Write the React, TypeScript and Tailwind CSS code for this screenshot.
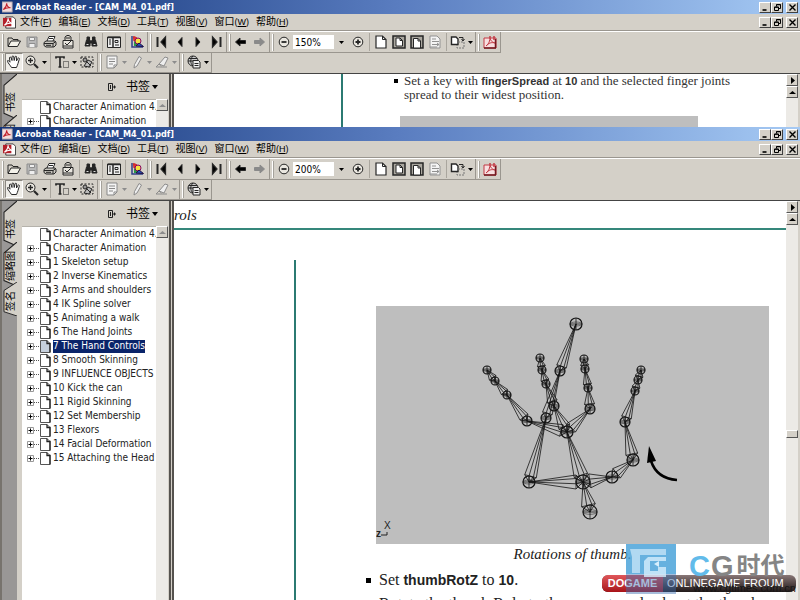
import { Fragment, useState } from "react";
import type { ReactNode } from "react";
import clsx from "clsx";

const MENUS = [
  { label: "文件", hotkey: "F" },
  { label: "编辑", hotkey: "E" },
  { label: "文档", hotkey: "D" },
  { label: "工具", hotkey: "T" },
  { label: "视图", hotkey: "V" },
  { label: "窗口", hotkey: "W" },
  { label: "帮助", hotkey: "H" },
];

const BOOKMARKS = [
  "Character Animation 4.",
  "Character Animation",
  "1 Skeleton setup",
  "2 Inverse Kinematics",
  "3 Arms and shoulders",
  "4 IK Spline solver",
  "5 Animating a walk",
  "6 The Hand Joints",
  "7 The Hand Controls",
  "8 Smooth Skinning",
  "9 INFLUENCE OBJECTS",
  "10 Kick the can",
  "11 Rigid Skinning",
  "12 Set Membership",
  "13 Flexors",
  "14 Facial Deformation",
  "15 Attaching the Head",
];

const ICONS: Record<string, ReactNode> = {
  open: (
    <>
      <path d="M2 12V4h4l1 1.5h5V7" />
      <path d="M2 12.5 5 7h9.5l-3 5.5z" fill="#f4f2ea" />
    </>
  ),
  save: (
    <g stroke="#8e8e8e">
      <path d="M3 3h10v10H3z" fill="#b8b8b8" />
      <path d="M5.500 3.500h5v3h-5zM5 13V9.500h6V13" fill="#eee" />
    </g>
  ),
  print: (
    <>
      <path d="m5 7 2-4.500h6L11 7" fill="#fff" />
      <path d="M2 8.500 4 7h9l1 1.500V11l-2 2H4l-2-1.500z" fill="#c9c6bf" />
      <path d="M2 9.500h9l3-2M11 9.500V13M7 4.500h4M4 11.300h5" />
    </>
  ),
  mail: (
    <>
      <path d="M5 6V3l2-1.500h2L11 3v3" />
      <path d="M3 6.500h10V14H3z" fill="#e9e6df" />
      <path d="m5 9 2 2 4-4M3 12h10M6 4h4" />
    </>
  ),
  find: (
    <g fill="#222">
      <path d="M4 3h2.500v3H4zM9.500 3H12v3H9.500zM2 12l1.500-6h3.500v6zM9 12V6h3.500L14 12z" />
      <path d="M7 7h2v2H7z" />
      <path d="M3.500 10.500h2M10.500 10.500h2" stroke="#ddd" />
    </g>
  ),
  pane: (
    <>
      <path d="M1.500 3h13v10.500h-13z" fill="#eee" />
      <path d="M2 3.500h12M7 4v9" strokeWidth="1.500" />
      <path d="M3 6h2M3 8h2M3 10h2M9 6.500h3v2H9zM9 11h4" />
    </>
  ),
  image: (
    <>
      <path d="M3 2v11h11" stroke="#303f86" strokeWidth="1.500" />
      <path d="m4.500 2.500 3 1L9 6l-4 1z" fill="#e33" stroke="#c22" />
      <path d="M5 7.500h3V12H5z" fill="#2b9b46" stroke="none" />
      <circle cx="9" cy="7" r="3" fill="#f5e23c" stroke="#806" />
      <path d="m7 12 3-3 4.500 3.500z" fill="#2352c4" stroke="#214" />
    </>
  ),
  first: (
    <>
      <path d="M3.500 3v10" strokeWidth="2" />
      <path d="M11.500 3 7 8l4.500 5z" fill="#000" strokeWidth="1.300" />
    </>
  ),
  prev: <path d="M10 3.500 6 8l4 4.500z" fill="#000" />,
  next: <path d="m6 3.500 4 4.500-4 4.500z" fill="#000" />,
  last: (
    <>
      <path d="M12.500 3v10" strokeWidth="2" />
      <path d="M4.500 3 9 8l-4.500 5z" fill="#000" strokeWidth="1.300" />
    </>
  ),
  back: <path d="m2.500 8 4.500-4v2.500h5.500v3H7V12z" fill="#000" />,
  forward: <path d="M13.500 8 9 4v2.500H3.500v3H9V12z" fill="#8a8a8a" stroke="#8a8a8a" />,
  minus: (
    <>
      <circle cx="8" cy="8" r="4.800" fill="#e9e6df" />
      <path d="M5.500 8h5" strokeWidth="1.800" />
    </>
  ),
  plus: (
    <>
      <circle cx="8" cy="8" r="4.800" fill="#e9e6df" />
      <path d="M5.500 8h5M8 5.500v5" strokeWidth="1.800" />
    </>
  ),
  actual: (
    <>
      <path d="M3 2h6.500L13 5.500V14H3z" fill="#fff" strokeWidth="1.200" />
      <path d="M9.500 2v3.500H13" />
    </>
  ),
  fitPage: (
    <>
      <path d="M2 2h12v12H2z" fill="#aaa79f" strokeWidth="1.500" />
      <path d="M5 4h4l2.500 2.500V12H5z" fill="#fff" />
      <path d="M9 4v2.500h2.500" />
    </>
  ),
  fitWidth: (
    <>
      <path d="M2 14V2h12v12z" fill="#aaa79f" strokeWidth="1.500" />
      <path d="M4.500 4.500H9L11.500 7v7h-7z" fill="#fff" />
      <path d="M9 4.500V7h2.500" />
    </>
  ),
  reflow: (
    <g stroke="#919191">
      <path d="M3 2h7l3 3v9H3z" fill="#f4f4f4" />
      <path d="M5 5h4M5 7.500h7M5 10.500h7M10 9l2 1.500-2 1.500M3 13h7" />
    </g>
  ),
  rotate: (
    <>
      <path d="M1.500 3H6l2 2v5.500H1.500z" fill="#fff" strokeWidth="1.400" />
      <path d="M9 3.500h4v3M11.500 5l1.500 2 1.500-2" />
      <path d="M8 8h6v6H7v-3" stroke="#777" strokeDasharray="2 1" />
    </>
  ),
  acrobat: (
    <g stroke="#c23b45">
      <path d="M2 4h12v10H2z" fill="#f8dfe0" />
      <path d="M2 14h12M13.500 5v9" stroke="#711a21" strokeWidth="1.500" />
      <path d="M4 12c3-2 4-5 4-10 0 5 2 6 5 7-4-1-6 0-9 3z" />
      <path d="M12 2v4" strokeWidth="1.500" />
    </g>
  ),
  hand: (
    <path
      d="M5.500 13.500C4 11 2 9 1.500 7.500s1-1.300 2.500.700L3.500 4c0-1.300 1.300-1.300 1.700 0L6 6.500V3c0-1.400 1.700-1.400 1.800 0l.4 3.500L9 3c.3-1.300 1.700-1 1.600.200L10.500 7l1.300-2.500c.600-1.100 1.900-.500 1.500.700L12 9.500c-.3 1.500-1 2.500-1.500 4z"
      fill="#fff"
    />
  ),
  zoomIn: (
    <>
      <circle cx="6.500" cy="6.500" r="4.500" fill="#e9e6df" />
      <path d="M4 6.500h5M6.500 4v5" strokeWidth="1.400" />
      <path d="m10 10 4 4" strokeWidth="2.200" />
    </>
  ),
  text: (
    <>
      <path d="M2 4.500V3h8v1.500M6 3v10M4.500 13h3" strokeWidth="1.700" />
      <path d="M9.500 7.500h5v6h-5z" strokeDasharray="1 1" />
    </>
  ),
  snapshot: (
    <>
      <path d="M2 3h12v10H2z" strokeDasharray="2 1.500" />
      <circle cx="6" cy="6" r="2" fill="#999" />
      <path d="m5 12 4-6 4 2-3 5zM7 7l5 5" fill="#bbb" />
    </>
  ),
  note: (
    <g stroke="#888">
      <path d="M3 2h10v9l-3 3H3z" fill="#f4f4f4" />
      <path d="M5 5h6M5 7.500h6M5 10h4M10 14v-3h3" />
    </g>
  ),
  pencil: <path d="M10 2.500 12.500 4 8 12l-3 2 .5-3.500z" fill="#eee" stroke="#8c8c8c" />,
  highlight: (
    <g stroke="#8c8c8c">
      <path d="m5 10 6-7 3 1-4 8z" fill="#eee" />
      <path d="m5 10-3 3h11M5 10l2.500 2" />
    </g>
  ),
  web: (
    <>
      <circle cx="7" cy="7" r="5" fill="#ccc" />
      <path d="M2 7h10M7 2C4 5 4 9 7 12M3 4.500h8" />
      <path d="M7 6.500h5.500L14 8v6H7z" fill="#eee" />
      <path d="M8.500 9.500h4M8.500 11.500h4" />
    </>
  ),
};

const Icon = ({ name }: { name: string }) => (
  <svg viewBox="0 0 16 16" className="h-4 w-4" fill="none" stroke="#262626" strokeWidth="1">
    {ICONS[name]}
  </svg>
);

const ToolButton = ({ name, active }: { name: string; active?: boolean }) => (
  <button
    type="button"
    aria-label={name}
    className={clsx(
      "flex h-[18px] w-[18px] shrink-0 items-center justify-center",
      active && "border border-[#8b8882] border-r-white border-b-white bg-[#efede8]",
    )}
  >
    <Icon name={name} />
  </button>
);

const DropArrow = ({ faded, label }: { faded?: boolean; label: string }) => (
  <button type="button" aria-label={label} className="flex h-[18px] w-[7px] shrink-0 items-center justify-center">
    <svg viewBox="0 0 5 3" className="h-[3px] w-[5px]">
      <path d="M0 0h5L2.500 3z" fill={faded ? "#8c8c8c" : "#000"} />
    </svg>
  </button>
);

const Separator = () => <div className="mx-0.5 h-[18px] w-px shrink-0 bg-[#aaa69e]" />;

const ToolGroup = ({ children }: { children: ReactNode }) => (
  <div className="flex h-[21px] shrink-0 items-center border-r border-b border-[#9a968f] pr-px">
    <div className="mr-px ml-0.5 h-[17px] w-0.5 border-l border-white bg-[#a5a29b]" />
    {children}
  </div>
);

const CAPTION_GLYPHS: Record<string, ReactNode> = {
  minimize: <path d="M1.500 7h4" strokeWidth="1.600" />,
  restore: (
    <>
      <path d="M3.500 3.500v-2h4v4h-2M3.500 1.800h4" />
      <path d="M1.500 4h4v3.500h-4zM1.500 4.300h4" />
    </>
  ),
  close: <path d="m1.500 1.500 6 6M7.500 1.500l-6 6" strokeWidth="1.400" />,
};

const CaptionButton = ({ kind }: { kind: string }) => (
  <button
    type="button"
    aria-label={kind}
    className="flex h-[11px] w-3 items-center justify-center border border-white border-r-[#404040] border-b-[#404040] bg-[#d4d0c8]"
  >
    <svg viewBox="0 0 9 9" className="h-[9px] w-[9px]" fill="none" stroke="#000">
      {CAPTION_GLYPHS[kind]}
    </svg>
  </button>
);

const CaptionButtons = () => (
  <div className="ml-auto flex pr-0.5">
    <CaptionButton kind="minimize" />
    <CaptionButton kind="restore" />
    <div className="w-[3px]" />
    <CaptionButton kind="close" />
  </div>
);

const PdfLogo = ({ small }: { small?: boolean }) => (
  <svg viewBox="0 0 14 14" className={small ? "h-3 w-3" : "h-[13px] w-[13px]"}>
    {small ? (
      <path d="M0 1h12v12H0z" fill="#f3dcdc" stroke="#8d8d9c" />
    ) : (
      <>
        <path d="M3 1h8l2.500 2.500V13H3z" fill="#fff" stroke="#333" />
        <path d="M0 2h9v9H0z" fill="#b3202a" />
      </>
    )}
    <path
      d="M1.500 10C4 8 5.500 5.500 5.500 2.500 5.500 6 7.500 7.500 10 8 7 7.500 4 8 1.500 10z"
      fill="none"
      stroke={small ? "#c01f2b" : "#fff"}
      strokeWidth="1.200"
    />
  </svg>
);

const PageIcon = ({ selected }: { selected: boolean }) => (
  <svg viewBox="0 0 11 13" className="h-[13px] w-[11px] shrink-0">
    <path d="M.5.500h6.500L10 3.500v9H.5z" fill={selected ? "#c5cfdc" : "#fff"} stroke="#555" />
    <path d="M7 .500v3h3v9" fill="none" stroke="#222" strokeWidth="1.300" />
  </svg>
);

const NavTab = ({ label, className }: { label: string; className: string }) => (
  <button type="button" className={clsx("relative flex w-full shrink-0 items-center justify-center", className)}>
    <svg viewBox="0 0 14 40" preserveAspectRatio="none" className="absolute inset-0 h-full w-full">
      <path d="M14 0 1 10v25l13 5z" fill="#d4d0c8" />
      <path d="M14 0 1 10v25l13 5" fill="none" stroke="#222" />
    </svg>
    <span className="relative rotate-180 text-[10px] leading-3 [text-orientation:sideways] [writing-mode:vertical-rl]">
      {label}
    </span>
  </button>
);

const ScrollButton = ({ path, label, pale }: { path: string; label: string; pale?: boolean }) => (
  <button
    type="button"
    aria-label={label}
    className="flex h-3 w-full shrink-0 items-center justify-center border border-white border-r-[#555] border-b-[#555] bg-[#d4d0c8]"
  >
    <svg viewBox="0 0 7 7" className="h-[7px] w-[7px]">
      <path d={path} fill={pale ? "#8c8c8c" : "#000"} />
    </svg>
  </button>
);

const Sidebar = () => {
  const [selected, setSelected] = useState(8);

  return (
    <aside className="flex w-[174px] shrink-0 overflow-hidden bg-[#d4d0c8]">
      <div className="flex w-[17px] shrink-0 flex-col border-l-2 border-[#77736d] bg-[#999796] pl-px">
        <NavTab label="书签" className="h-[45px] pt-2.5 pl-0.5" />
        <NavTab label="缩略图" className="-mt-1 h-11 pt-1 pl-0.5" />
        <NavTab label="签名" className="-mt-1 h-[34px] pt-1 pl-0.5" />
      </div>
      <div className="flex min-w-0 flex-1 flex-col pl-[5px]">
        <div className="flex h-[25px] shrink-0 items-center justify-end gap-1 pr-2.5">
          <button type="button" aria-label="collapse" className="mr-1.5">
            <svg viewBox="0 0 8 8" className="h-2 w-2" fill="none" stroke="#222">
              <path d="M.5.500h4v7h-4zM2.500 2v4M5 4h3M6.500 2.500v3" />
            </svg>
          </button>
          <button type="button" className="flex items-center gap-0.5 text-xs leading-4">
            书签
            <svg viewBox="0 0 6 4" className="h-1 w-1.5">
              <path d="M0 0h6L3 4z" />
            </svg>
          </button>
        </div>
        <div className="flex min-h-0 flex-1">
          <ul className="min-w-0 flex-1 overflow-hidden border-t border-[#b5b2ab] bg-white">
            {BOOKMARKS.map((title, i) => (
              <li key={title} className="flex h-3.5 items-center pl-1">
                {i > 0 ? (
                  <button type="button" aria-label={`expand ${title}`} className="w-3.5 shrink-0">
                    <svg viewBox="0 0 14 9" className="h-[9px] w-3.5" fill="none" stroke="#555">
                      <path d="M1.500 1.500h6v6h-6z" stroke="#999" />
                      <path d="M2.500 4.500h4M4.500 2.500v4" stroke="#000" />
                      <path d="M8 4.500h6" strokeDasharray="1 1" />
                    </svg>
                  </button>
                ) : (
                  <span className="w-3.5 shrink-0" />
                )}
                <PageIcon selected={i === selected} />
                <button
                  type="button"
                  onClick={() => setSelected(i)}
                  className={clsx(
                    "ml-0.5 h-[13px] font-['DejaVu_Sans_Condensed','DejaVu_Sans',sans-serif] text-[10px] leading-3 whitespace-nowrap",
                    i === selected ? "bg-[#0a246a] text-white" : "text-[#222]",
                  )}
                >
                  {title}
                </button>
              </li>
            ))}
          </ul>
          <div className="w-3 shrink-0 bg-[#eceae6]">
            <ScrollButton path="M0 5h7L3.500 2z" label="scroll bookmarks up" pale />
          </div>
        </div>
      </div>
      <div className="w-px shrink-0" />
      <div className="w-[5px] shrink-0 border-x-2 border-[#55524e] bg-[#d4d0c8]" />
    </aside>
  );
};

type AcrobatWindowProps = {
  zoom: string;
  thumb?: boolean;
  className: string;
  children: ReactNode;
};

const AcrobatWindow = ({ zoom, thumb, className, children }: AcrobatWindowProps) => {
  const [zoomValue, setZoomValue] = useState(zoom);

  return (
    <section className={clsx("flex w-full flex-col overflow-hidden bg-[#d4d0c8]", className)}>
      <header className="flex h-3.5 shrink-0 items-center bg-linear-to-r from-[#153579] via-[#5a7dc0] to-[#a6caf4] pl-0.5">
        <PdfLogo small />
        <h1 className="ml-px font-['DejaVu_Sans_Condensed','DejaVu_Sans',sans-serif] text-[9px] leading-3 font-bold whitespace-nowrap text-white">
          Acrobat Reader - [CAM_M4_01.pdf]
        </h1>
        <CaptionButtons />
      </header>
      <nav className="flex h-[17px] shrink-0 items-center border-b border-[#9a968f] pl-[3px]">
        <PdfLogo />
        <div className="ml-1 flex gap-[7px]">
          {MENUS.map(({ label, hotkey }) => (
            <button key={hotkey} type="button" className="text-[10px] leading-3.5 whitespace-nowrap">
              {label}
              <span className="text-[9px]">
                (<span className="underline">{hotkey}</span>)
              </span>
            </button>
          ))}
        </div>
        <CaptionButtons />
      </nav>
      <div className="flex h-[21px] shrink-0 border-t border-white">
        <ToolGroup>
          {["open", "save", "print", "mail"].map((name) => (
            <ToolButton key={name} name={name} />
          ))}
          {["find", "pane", "image"].map((name) => (
            <Fragment key={name}>
              <Separator />
              <ToolButton name={name} />
            </Fragment>
          ))}
        </ToolGroup>
        <ToolGroup>
          {["first", "prev", "next", "last"].map((name) => (
            <ToolButton key={name} name={name} />
          ))}
        </ToolGroup>
        <ToolGroup>
          <ToolButton name="back" />
          <ToolButton name="forward" />
        </ToolGroup>
        <ToolGroup>
          <ToolButton name="minus" />
          <input
            type="text"
            aria-label="zoom"
            value={zoomValue}
            onChange={(e) => setZoomValue(e.target.value)}
            className="h-3.5 w-[41px] bg-white pl-0.5 font-['DejaVu_Sans_Condensed','DejaVu_Sans',sans-serif] text-[10px] leading-3 outline-none"
          />
          <div className="px-1">
            <DropArrow label="zoom levels" />
          </div>
          <ToolButton name="plus" />
          <Separator />
          {["actual", "fitPage", "fitWidth", "reflow"].map((name) => (
            <ToolButton key={name} name={name} />
          ))}
          <Separator />
          <ToolButton name="rotate" />
          <DropArrow label="rotate options" />
        </ToolGroup>
        <ToolGroup>
          <ToolButton name="acrobat" />
        </ToolGroup>
      </div>
      <div className="flex h-[21px] shrink-0">
        <ToolGroup>
          <ToolButton name="hand" active />
          <ToolButton name="zoomIn" />
          <DropArrow label="zoom tools" />
          <Separator />
          <ToolButton name="text" />
          <DropArrow label="text tools" />
          <ToolButton name="snapshot" />
        </ToolGroup>
        <ToolGroup>
          {["note", "pencil", "highlight"].map((name) => (
            <div key={name} className="flex">
              <ToolButton name={name} />
              <DropArrow label={`${name} options`} faded />
            </div>
          ))}
        </ToolGroup>
        <ToolGroup>
          <ToolButton name="web" />
          <DropArrow label="web options" />
        </ToolGroup>
      </div>
      <div className="flex min-h-0 flex-1 border-t border-[#444]">
        <Sidebar />
        <main className="min-w-0 flex-1 overflow-hidden bg-white">{children}</main>
        <div className="mr-0.5 flex w-3 shrink-0 flex-col bg-[#eceae6]">
          <ScrollButton path="M2 0v7l4-3.500z" label="next view" />
          <ScrollButton path="M0 5h7L3.500 2z" label="scroll up" />
          {thumb && (
            <div className="mt-[205px] h-2 border border-white border-r-[#555] border-b-[#555] bg-[#d4d0c8]" />
          )}
        </div>
      </div>
    </section>
  );
};

// [x, y, radius]
const JOINTS: Record<string, [number, number, number]> = {
  wrist: [590, 512, 7],
  palm: [583, 482, 7],
  thumb1: [529, 482, 6],
  thumb2: [546, 418, 5],
  thumb3: [560, 371, 5],
  thumbTip: [576, 324, 6],
  knuckle: [567, 432, 6],
  a1: [527, 421, 5],
  a2: [507, 395, 4],
  a3: [495, 381, 4],
  aTip: [487, 370, 4],
  b1: [554, 406, 5],
  b2: [546, 384, 4],
  b3: [542, 370, 4],
  bTip: [540, 358, 4],
  c1: [590, 409, 5],
  c2: [588, 388, 4],
  c3: [585, 369, 4],
  cTip: [584, 359, 4],
  d0: [612, 477, 6],
  d1: [633, 460, 6],
  d2: [625, 422, 5],
  d3: [635, 391, 4],
  d4: [638, 380, 4],
  dTip: [641, 370, 4],
};

// wide end first, pointed end second
const BONES = [
  ["wrist", "palm"],
  ["palm", "thumb1"],
  ["thumb1", "thumb2"],
  ["thumb2", "thumb3"],
  ["thumb3", "thumbTip"],
  ["palm", "knuckle"],
  ["knuckle", "a1"],
  ["a1", "a2"],
  ["a2", "a3"],
  ["a3", "aTip"],
  ["knuckle", "b1"],
  ["b1", "b2"],
  ["b2", "b3"],
  ["b3", "bTip"],
  ["knuckle", "c1"],
  ["c1", "c2"],
  ["c2", "c3"],
  ["c3", "cTip"],
  ["palm", "d0"],
  ["d0", "d1"],
  ["d1", "d2"],
  ["d2", "d3"],
  ["d3", "d4"],
  ["d4", "dTip"],
];

const bonePath = (from: string, to: string) => {
  const [x1, y1, r] = JOINTS[from];
  const [x2, y2] = JOINTS[to];
  const len = Math.hypot(x2 - x1, y2 - y1);
  const ux = (x2 - x1) / len;
  const uy = (y2 - y1) / len;
  const bx = x1 + ux * r;
  const by = y1 + uy * r;
  const points = [-r, -r / 4, r / 2, r].map((w) => [bx - uy * w, by + ux * w]);
  const base = points.map(([x, y], i) => `${i ? "L" : "M"}${x} ${y}`).join("");
  return base + points.map(([x, y]) => `M${x1} ${y1}L${x} ${y}L${x2} ${y2}`).join("");
};

const HandRig = () => (
  <svg viewBox="376 306 393 238" className="block h-[238px] w-[393px] bg-[#bebebe]">
    <g fill="none" stroke="#141414" strokeWidth="0.800">
      {BONES.map(([from, to]) => (
        <path key={from + to} d={bonePath(from, to)} />
      ))}
      {Object.entries(JOINTS).map(([name, [x, y, r]]) => (
        <g key={name}>
          <circle cx={x} cy={y} r={r} strokeWidth="1.200" />
          <path d={`M${x - r} ${y}h${r * 2}M${x} ${y - r}v${r * 2}`} />
          <ellipse cx={x} cy={y} rx={r} ry={r / 3} strokeWidth="0.500" />
        </g>
      ))}
    </g>
    <path d="M677 480c-14-1-22-7-26-19" fill="none" stroke="#000" strokeWidth="2.500" />
    <path d="m649 446 7 15-9 2z" />
    <g className="font-['Liberation_Sans',sans-serif]" fill="#222">
      <text x="384" y="529" fontSize="10">
        X
      </text>
      <text x="376" y="537" fontSize="10" fontWeight="bold">
        z
      </text>
      <text x="561" y="549" fontSize="9">
        persp
      </text>
    </g>
    <path d="M381 535h6v-3" fill="none" stroke="#222" />
  </svg>
);

const Term = ({ children, large }: { children: ReactNode; large?: boolean }) => (
  <b className={clsx("font-['Liberation_Sans',Arial,sans-serif]", large ? "text-sm" : "text-[11px]")}>{children}</b>
);

const Watermark = () => (
  <div className="pointer-events-none absolute right-1 bottom-1.5 h-[50px] w-[194px] font-['Liberation_Sans','Noto_Sans_CJK_SC',sans-serif]">
    <div className="absolute bottom-0.5 left-0 flex h-[17px] w-full items-center overflow-hidden rounded-md bg-linear-to-b from-[#8a7878] to-[#221a1a]">
      <span className="flex h-full w-[61px] items-center justify-center bg-linear-to-b from-[#e0565a] to-[#a81018] text-[11px] font-bold text-white">
        DOGAME
      </span>
      <span className="ml-1 text-[11px] whitespace-nowrap text-white">ONLINEGAME FROUM</span>
    </div>
    <svg viewBox="0 0 50 50" className="absolute top-0 left-6 h-[50px] w-[50px]">
      <path d="M0 0h50v30H0z" fill="#4ba3d9" opacity="0.850" />
      <path d="M0 30h50v20H0z" fill="#3a6cb0" opacity="0.450" />
      <path d="M4 5h36v6H14v18H6V13z" fill="#c4e4f6" opacity="0.800" />
      <path d="M40 13v4H24v10h8v-4h8v10H18V17l4-4z" fill="#d7effd" opacity="0.800" />
      <path d="m28 20 5-3v6z" fill="#d7effd" />
    </svg>
    <div className="absolute top-1.5 left-[87px] flex items-center gap-px text-[29px] leading-8 font-bold whitespace-nowrap text-[#858585]">
      <span className="text-[#62bbea]">C</span>
      <span>G</span>
      <span className="ml-0.5 text-2xl leading-8">时代</span>
    </div>
    <span className="absolute right-0 bottom-0 text-[11px] leading-3 text-[#161616]">www.cgtimes.com.cn</span>
  </div>
);

const App = () => {
  return (
    <div className="relative flex h-screen w-full flex-col overflow-hidden font-['Liberation_Sans','Noto_Sans_CJK_SC',sans-serif] text-black">
      <AcrobatWindow zoom="150%" className="h-[127px] shrink-0">
        <div className="flex h-full">
          <div className="w-[169px] shrink-0 border-r-2 border-[#2b7a72]" />
          <div className="pl-[51px]">
            <div className="flex items-start font-['Liberation_Serif',serif] text-[13px] leading-3.5 text-[#333]">
              <span className="mt-[5px] mr-1.5 h-1 w-1 shrink-0 bg-black" />
              <p>
                Set a key with <Term>fingerSpread</Term> at <Term>10</Term> and the selected finger joints
                <br />
                spread to their widest position.
              </p>
            </div>
            <div className="mt-3.5 ml-1.5 h-4 w-[298px] bg-[#bebebe]" />
          </div>
        </div>
      </AcrobatWindow>
      <AcrobatWindow zoom="200%" thumb className="min-h-0 flex-1">
        <div className="flex h-full flex-col font-['Liberation_Serif',serif] text-[#222]">
          <div className="h-[29px] shrink-0 border-b-2 border-[#35877b]">
            <span className="text-[15px] leading-7 italic">rols</span>
          </div>
          <div className="flex min-h-0 flex-1">
            <div className="mt-[30px] w-[122px] shrink-0 border-r-2 border-[#2b7a72]" />
            <div className="min-w-0 flex-1 pt-[76px] pl-[70px]">
              <figure className="ml-2.5 w-[393px]">
                <HandRig />
                <figcaption className="text-center text-[15px] leading-5 italic">Rotations of thumb.</figcaption>
              </figure>
              <ul className="mt-1 text-base leading-6">
                {[
                  <Fragment key="set">
                    Set <Term large>thumbRotZ</Term> to <Term large>10</Term>.
                  </Fragment>,
                  <Fragment key="rotate">Rotate the thumb Roly to the correct angle about the thumb</Fragment>,
                ].map((line, i) => (
                  <li key={i} className="flex items-center whitespace-nowrap">
                    {i === 0 ? <span className="mr-2 h-[5px] w-[5px] bg-black" /> : <span className="mr-2 w-[5px]" />}
                    <span>{line}</span>
                  </li>
                ))}
              </ul>
            </div>
          </div>
        </div>
      </AcrobatWindow>
      <Watermark />
    </div>
  );
};

export default App;
